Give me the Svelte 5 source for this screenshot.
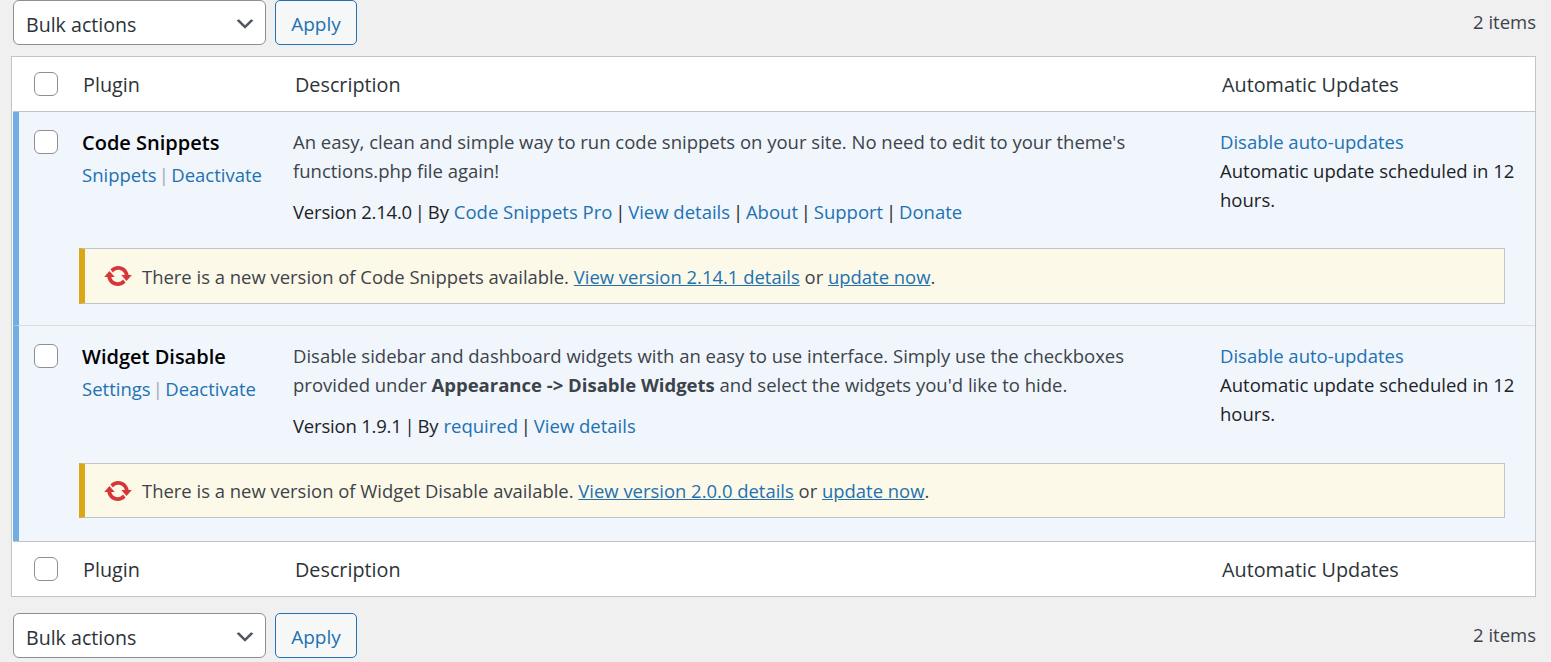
<script lang="ts">
  const columns = ['Plugin', 'Description', 'Automatic Updates'];
</script>

{#snippet bulk()}
  <div class="tablenav">
    <div class="select-wrapper">
      <select class="bulk-select">
        <option>Bulk actions</option>
      </select>
      <svg class="select-arrow" width="24" height="24" viewBox="0 0 20 20" aria-hidden="true">
        <path d="M5 6l5 5 5-5 2 1-7 7-7-7z" fill="#50575e" />
      </svg>
    </div>
    <button class="apply">Apply</button>
    <span class="count">2 items</span>
  </div>
{/snippet}

{#snippet headRow(cls)}
  <div class="head-row {cls}">
    <span class="check-cell"><input type="checkbox" class="check" /></span>
    <span>{columns[0]}</span>
    <span>{columns[1]}</span>
    <span>{columns[2]}</span>
  </div>
{/snippet}

{#snippet autoCol()}
  <div class="auto-col">
    <a href="#top">Disable auto-updates</a>
    <div>Automatic update scheduled in 12 hours.</div>
  </div>
{/snippet}

{#snippet updateIcon()}
  <svg class="update-icon" width="30" height="30" viewBox="0 0 20 20" aria-hidden="true">
    <path fill="#d63638" d="M10.2 3.28c3.53 0 6.43 2.61 6.92 6h2.08l-3.5 4-3.5-4h2.32c-.45-1.97-2.21-3.45-4.32-3.45-1.45 0-2.73.71-3.54 1.78L4.95 5.66C6.23 4.2 8.11 3.28 10.2 3.28zm-.4 13.44c-3.52 0-6.43-2.61-6.92-6H.8l3.5-4c1.17 1.33 2.33 2.67 3.5 4H5.48c.45 1.97 2.21 3.45 4.32 3.45 1.45 0 2.73-.71 3.54-1.78l1.71 1.95c-1.28 1.46-3.15 2.38-5.25 2.38z" />
  </svg>
{/snippet}

<div class="page" id="top">
  {@render bulk()}

  <div class="table">
    {@render headRow('head-top')}

    <div class="plugin">
      <div class="plugin-main">
        <span class="check-cell"><input type="checkbox" class="check" /></span>
        <div class="name-col">
          <strong class="name">Code Snippets</strong>
          <div class="actions"><a href="#top">Snippets</a> <span class="pipe light">|</span> <a href="#top">Deactivate</a></div>
        </div>
        <div class="desc-col">
          <p>An easy, clean and simple way to run code snippets on your site. No need to edit to your theme's functions.php file again!</p>
          <div class="meta"><span class="version">Version 2.14.0</span> <span class="pipe">|</span> By <a href="#top">Code Snippets Pro</a> <span class="pipe">|</span> <a href="#top">View details</a> <span class="pipe">|</span> <a href="#top">About</a> <span class="pipe">|</span> <a href="#top">Support</a> <span class="pipe">|</span> <a href="#top">Donate</a></div>
        </div>
        {@render autoCol()}
      </div>
      <div class="notice">
        {@render updateIcon()}
        <span>There is a new version of Code Snippets available. <a class="ul" href="#top">View version 2.14.1 details</a> or <a class="ul" href="#top">update now</a>.</span>
      </div>
    </div>

    <div class="plugin second">
      <div class="plugin-main">
        <span class="check-cell"><input type="checkbox" class="check" /></span>
        <div class="name-col">
          <strong class="name">Widget Disable</strong>
          <div class="actions"><a href="#top">Settings</a> <span class="pipe light">|</span> <a href="#top">Deactivate</a></div>
        </div>
        <div class="desc-col">
          <p>Disable sidebar and dashboard widgets with an easy to use interface. Simply use the checkboxes provided under <b>Appearance -&gt; Disable Widgets</b> and select the widgets you'd like to hide.</p>
          <div class="meta"><span class="version">Version 1.9.1</span> <span class="pipe">|</span> By <a href="#top">required</a> <span class="pipe">|</span> <a href="#top">View details</a></div>
        </div>
        {@render autoCol()}
      </div>
      <div class="notice">
        {@render updateIcon()}
        <span>There is a new version of Widget Disable available. <a class="ul" href="#top">View version 2.0.0 details</a> or <a class="ul" href="#top">update now</a>.</span>
      </div>
    </div>

    {@render headRow('head-bottom')}
  </div>

  <div class="bottom-nav">
    {@render bulk()}
  </div>
</div>

<style>
  :global(body) {
    margin: 0;
    background: #f0f0f1;
    overflow: hidden;
  }

  .page {
    height: 662px;
    padding: 0 15px 0 11px;
    box-sizing: border-box;
    font-family: "Open Sans", "Noto Sans", sans-serif;
    font-size: 18.5px;
    line-height: 29px;
    color: #3c434a;
  }

  a {
    color: #2271b1;
    text-decoration: none;
  }

  a.ul {
    text-decoration: underline;
  }

  .tablenav {
    display: flex;
    align-items: flex-start;
    height: 56px;
    padding-left: 2px;
    gap: 9px;
  }

  .bottom-nav {
    padding-top: 16px;
  }

  .select-wrapper {
    position: relative;
    display: flex;
  }

  .bulk-select {
    width: 253px;
    height: 45px;
    padding: 3px 12px 0;
    appearance: none;
    -webkit-appearance: none;
    background: #fff;
    border: 1px solid #8c8f94;
    border-radius: 6px;
    font: inherit;
    font-size: 19.6px;
    color: #2c3338;
  }

  .select-arrow {
    position: absolute;
    right: 9px;
    top: 12px;
    pointer-events: none;
  }

  .apply {
    width: 82px;
    height: 45px;
    padding: 3px 0 0;
    background: #f6f7f7;
    border: 1px solid #2271b1;
    border-radius: 5px;
    font: inherit;
    font-size: 19px;
    color: #2271b1;
  }

  .count {
    margin-left: auto;
    line-height: 44px;
  }

  .table {
    background: #fff;
    border: 1px solid #c3c4c7;
    box-sizing: border-box;
    padding: 0 0 0 1px;
  }

  .head-row {
    display: grid;
    grid-template-columns: 70px 212px 927px 1fr;
    align-items: center;
    height: 54px;
    font-size: 19.8px;
    color: #2c3338;
  }

  .head-top {
    border-bottom: 1px solid #c3c4c7;
  }

  .head-bottom {
    border-top: 1px solid #c3c4c7;
  }

  .check-cell {
    display: flex;
    padding-left: 21px;
  }

  .check {
    appearance: none;
    -webkit-appearance: none;
    width: 24px;
    height: 24px;
    margin: 0;
    background: #fff;
    border: 1px solid #8c8f94;
    border-radius: 6px;
    box-sizing: border-box;
  }

  .plugin {
    background: #f0f6fc;
    border-left: 6px solid #72aee6;
    height: 213px;
    box-sizing: border-box;
  }

  .second {
    border-top: 1px solid #dcdcde;
    height: 216px;
  }

  .plugin-main {
    display: grid;
    grid-template-columns: 63px 211px 927px 1fr;
    height: 136px;
    padding-top: 15px;
    box-sizing: border-box;
  }

  .second .plugin-main {
    height: 137px;
  }

  .plugin-main .check-cell {
    padding-left: 15px;
    padding-top: 3px;
  }

  .name-col {
    display: flex;
    flex-direction: column;
    padding-top: 1px;
  }

  .name {
    color: #000;
    font-size: 20px;
    font-weight: 600;
  }

  .actions {
    margin-top: 3px;
  }

  .pipe {
    margin: 0 -2px;
    color: #1d2327;
  }

  .pipe.light {
    margin: 0 -2.6px;
    color: #a7aaad;
  }

  .version {
    letter-spacing: -0.2px;
  }

  .desc-col {
    padding-right: 60px;
  }

  .desc-col p {
    margin: 0 0 12px;
  }

  .meta {
    color: #1d2327;
  }

  .auto-col {
    color: #1d2327;
    padding-right: 10px;
  }

  .notice {
    display: flex;
    align-items: center;
    gap: 9.5px;
    margin-left: 60px;
    margin-right: 30px;
    height: 56px;
    box-sizing: border-box;
    padding-left: 17.5px;
    font-size: 18.45px;
    background: #fcf9e8;
    border: 1px solid #c3c4c7;
    border-left: 6px solid #dba617;
  }

  .second .notice {
    height: 55px;
  }
</style>
